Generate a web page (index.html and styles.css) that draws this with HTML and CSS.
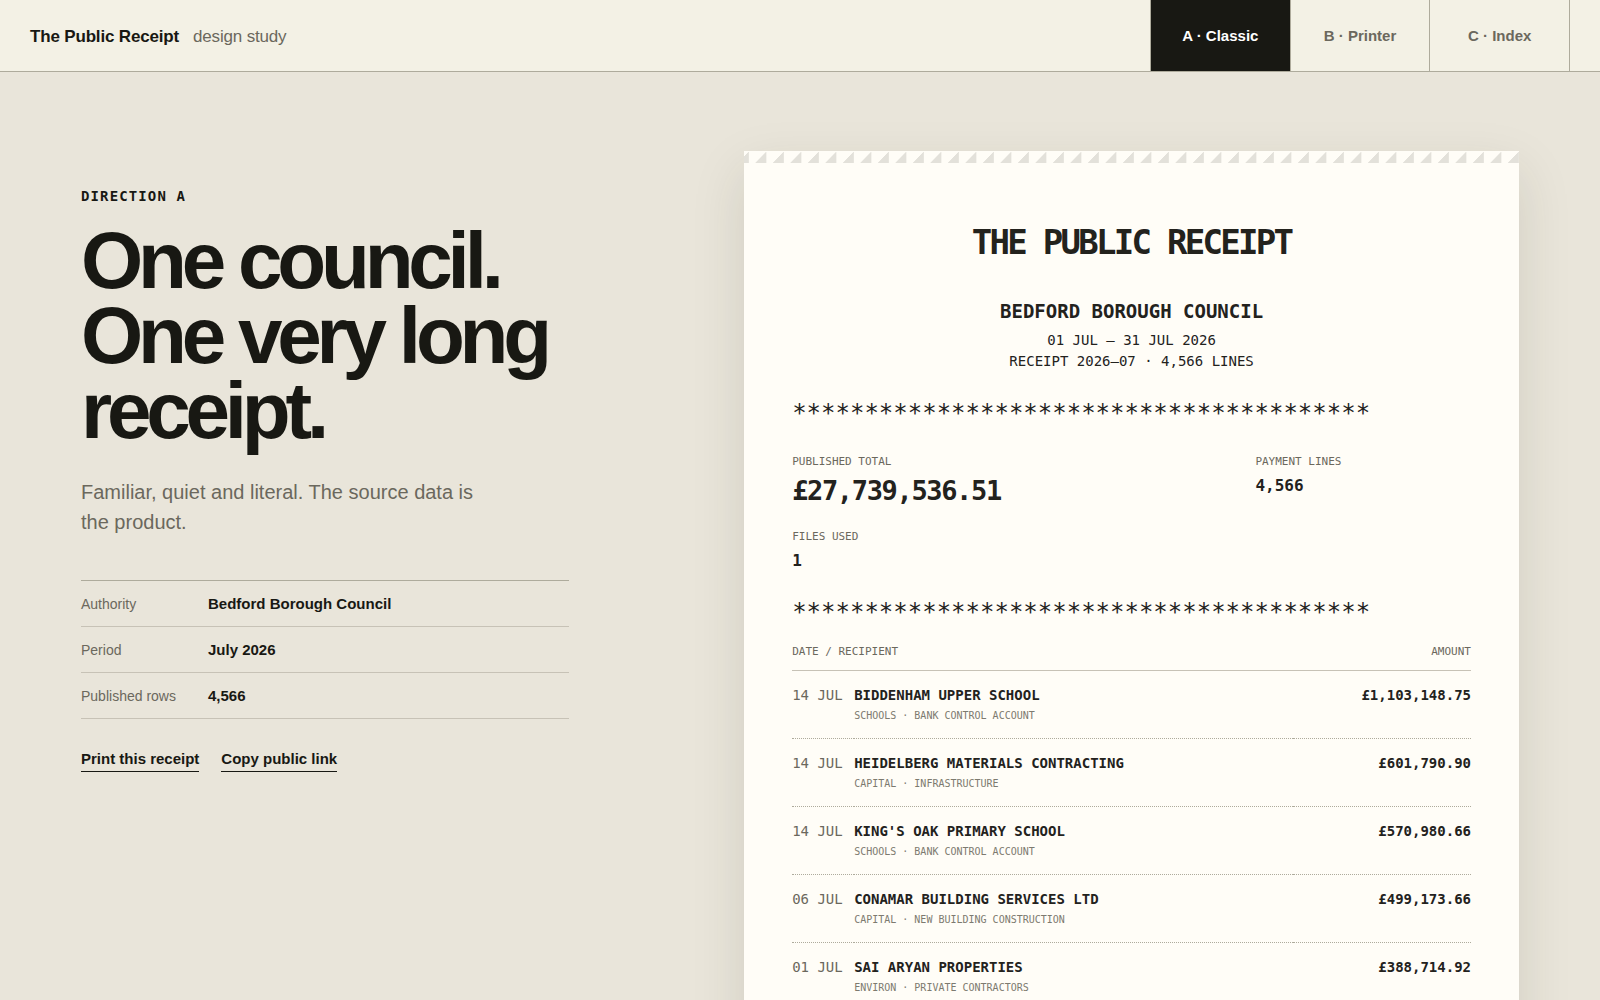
FILE: index.html
```
<!DOCTYPE html>
<html lang="en">
  <head>
    <meta charset="UTF-8" />
    <meta name="viewport" content="width=device-width, initial-scale=1" />
    <title>The Public Receipt</title>
    <link rel="stylesheet" href="styles.css">
  </head>
  <body>
    <header class="topbar">
      <p class="brand"><strong>The Public Receipt</strong><span>design study</span></p>
      <nav class="tabs">
        <a class="active" href="#a">A · Classic</a>
        <a href="#b">B · Printer</a>
        <a href="#c">C · Index</a>
      </nav>
    </header>

    <main class="stage">
      <section class="intro">
        <p class="eyebrow">DIRECTION A</p>
        <h1>One council. One very long receipt.</h1>
        <p class="lead">Familiar, quiet and literal. The source data is the product.</p>
        <dl class="facts">
          <div><dt>Authority</dt><dd>Bedford Borough Council</dd></div>
          <div><dt>Period</dt><dd>July 2026</dd></div>
          <div><dt>Published rows</dt><dd>4,566</dd></div>
        </dl>
        <div class="actions">
          <button type="button">Print this receipt</button>
          <button type="button">Copy public link</button>
        </div>
      </section>

      <article class="receipt">
        <header class="receipt-head">
          <h2>THE PUBLIC RECEIPT</h2>
          <h3>BEDFORD BOROUGH COUNCIL</h3>
          <p>01 JUL — 31 JUL 2026</p>
          <p>RECEIPT 2026–07 · 4,566 LINES</p>
        </header>

        <p class="stars">****************************************</p>

        <dl class="totals">
          <div class="grand"><dt>PUBLISHED TOTAL</dt><dd>£27,739,536.51</dd></div>
          <div><dt>PAYMENT LINES</dt><dd>4,566</dd></div>
          <div><dt>FILES USED</dt><dd>1</dd></div>
        </dl>

        <p class="stars">****************************************</p>

        <table class="lines">
          <thead>
            <tr>
              <th colspan="2">DATE / RECIPIENT</th>
              <th class="amount">AMOUNT</th>
            </tr>
          </thead>
          <tbody>
            <tr>
              <td class="date">14 JUL</td>
              <td><strong>BIDDENHAM UPPER SCHOOL</strong><small>SCHOOLS · BANK CONTROL ACCOUNT</small></td>
              <td class="amount">£1,103,148.75</td>
            </tr>
            <tr>
              <td class="date">14 JUL</td>
              <td><strong>HEIDELBERG MATERIALS CONTRACTING</strong><small>CAPITAL · INFRASTRUCTURE</small></td>
              <td class="amount">£601,790.90</td>
            </tr>
            <tr>
              <td class="date">14 JUL</td>
              <td><strong>KING'S OAK PRIMARY SCHOOL</strong><small>SCHOOLS · BANK CONTROL ACCOUNT</small></td>
              <td class="amount">£570,980.66</td>
            </tr>
            <tr>
              <td class="date">06 JUL</td>
              <td><strong>CONAMAR BUILDING SERVICES LTD</strong><small>CAPITAL · NEW BUILDING CONSTRUCTION</small></td>
              <td class="amount">£499,173.66</td>
            </tr>
            <tr>
              <td class="date">01 JUL</td>
              <td><strong>SAI ARYAN PROPERTIES</strong><small>ENVIRON · PRIVATE CONTRACTORS</small></td>
              <td class="amount">£388,714.92</td>
            </tr>
          </tbody>
        </table>
      </article>
    </main>
  </body>
</html>
```
FILE: styles.css
```
:root {
  --ink: #181813;
  --print: #23221d;
  --muted: #6b685d;
  --line: #aeab9c;
  --line-soft: #c7c2b6;
  --page: #e9e5da;
  --bar: #f3f1e5;
  --paper: #fffdf7;
  --sans: "Liberation Sans", Arial, sans-serif;
  --mono: "DejaVu Sans Mono", monospace;
}

* {
  box-sizing: border-box;
  margin: 0;
  padding: 0;
}

body {
  background: var(--page);
  color: var(--ink);
  font-family: var(--sans);
}

/* top bar */
.topbar {
  display: flex;
  justify-content: space-between;
  height: 72px;
  padding: 0 30px;
  background: var(--bar);
  border-bottom: 1px solid var(--line);
}

.brand {
  display: flex;
  align-items: center;
  gap: 14px;
  padding-top: 2px;
  font-size: 17px;
  letter-spacing: -0.01em;
}

.brand span {
  color: var(--muted);
}

.tabs {
  display: flex;
  width: 420px;
  border-left: 1px solid var(--line);
}

.tabs a {
  flex: 1;
  display: flex;
  align-items: center;
  justify-content: center;
  border-right: 1px solid var(--line);
  color: var(--muted);
  font-size: 15px;
  font-weight: bold;
  text-decoration: none;
}

.tabs .active {
  background: var(--ink);
  color: #fff;
}

/* page */
.stage {
  display: grid;
  grid-template-columns: 63fr 100fr;
  gap: 175px;
  align-items: start;
  height: calc(100vh - 72px);
  padding: 79px 81px 0;
  overflow: hidden;
}

.intro {
  padding-top: 35px;
}

.eyebrow {
  font-family: var(--mono);
  font-size: 14px;
  font-weight: bold;
  line-height: 21px;
  letter-spacing: 0.08em;
}

h1 {
  margin-top: 16px;
  font-size: 80px;
  line-height: 75px;
  letter-spacing: -0.065em;
}

.lead {
  max-width: 420px;
  margin-top: 29px;
  color: var(--muted);
  font-size: 20px;
  line-height: 30px;
}

.facts {
  margin-top: 43px;
  border-top: 1px solid var(--line);
}

.facts div {
  display: grid;
  grid-template-columns: 127px 1fr;
  padding: 14px 0 13px;
  border-bottom: 1px solid var(--line-soft);
  line-height: 18px;
}

.facts dt {
  color: var(--muted);
  font-size: 14px;
}

.facts dd {
  font-size: 15px;
  font-weight: bold;
}

.actions {
  display: flex;
  gap: 22px;
  margin-top: 31px;
}

.actions button {
  padding-bottom: 3px;
  background: none;
  border: 0;
  border-bottom: 1px solid var(--ink);
  color: var(--ink);
  font: bold 15px/18px var(--sans);
  cursor: pointer;
}

/* receipt */
.receipt {
  position: relative;
  padding: 72px 48px;
  background: var(--paper);
  box-shadow: 0 20px 50px rgba(50, 46, 30, 0.13);
  color: var(--print);
  font-family: var(--mono);
  font-size: 14px;
  line-height: 21px;
}

/* torn edge */
.receipt::before {
  content: "";
  position: absolute;
  top: 0;
  left: 0;
  right: 0;
  height: 12px;
  background: linear-gradient(135deg, transparent calc(100% - 8px), #e3e1da calc(100% - 8px)) right top / 2.26% 100%;
}

.receipt-head {
  text-align: center;
}

.receipt-head h2 {
  font-size: 34px;
  line-height: 38px;
  letter-spacing: -0.08em;
}

.receipt-head h3 {
  margin: 36px 0 5px;
  font-size: 19px;
  line-height: 28px;
}

.stars {
  margin: 29px 0;
  font-size: 24px;
  line-height: 24px;
  white-space: nowrap;
}

.totals {
  display: grid;
  grid-template-columns: 2fr 1fr;
  gap: 22px 32px;
}

.totals dt {
  margin-bottom: 5px;
  color: var(--muted);
  font-size: 11px;
  line-height: 16px;
}

.totals dd {
  font-size: 16px;
  font-weight: bold;
}

.totals .grand dd {
  font-size: 27px;
  line-height: 32px;
  letter-spacing: -0.05em;
}

.totals + .stars {
  margin-bottom: 20px;
}

.lines {
  width: 100%;
  border-collapse: collapse;
}

.lines thead tr {
  border-bottom: 1px solid var(--line-soft);
}

.lines tbody tr {
  border-bottom: 1px dotted var(--line);
}

.lines th {
  padding-bottom: 10px;
  color: var(--muted);
  font-size: 11px;
  font-weight: normal;
  line-height: 16px;
  text-align: left;
}

.lines td {
  padding: 14px 0 15px;
  vertical-align: top;
}

.lines .date {
  width: 62px;
  color: var(--muted);
}

.lines small {
  display: block;
  margin-top: 2px;
  color: #7d7a6f;
  font-size: 10px;
  line-height: 15px;
}

.lines .amount {
  text-align: right;
}

.lines td.amount {
  font-weight: bold;
}
```
